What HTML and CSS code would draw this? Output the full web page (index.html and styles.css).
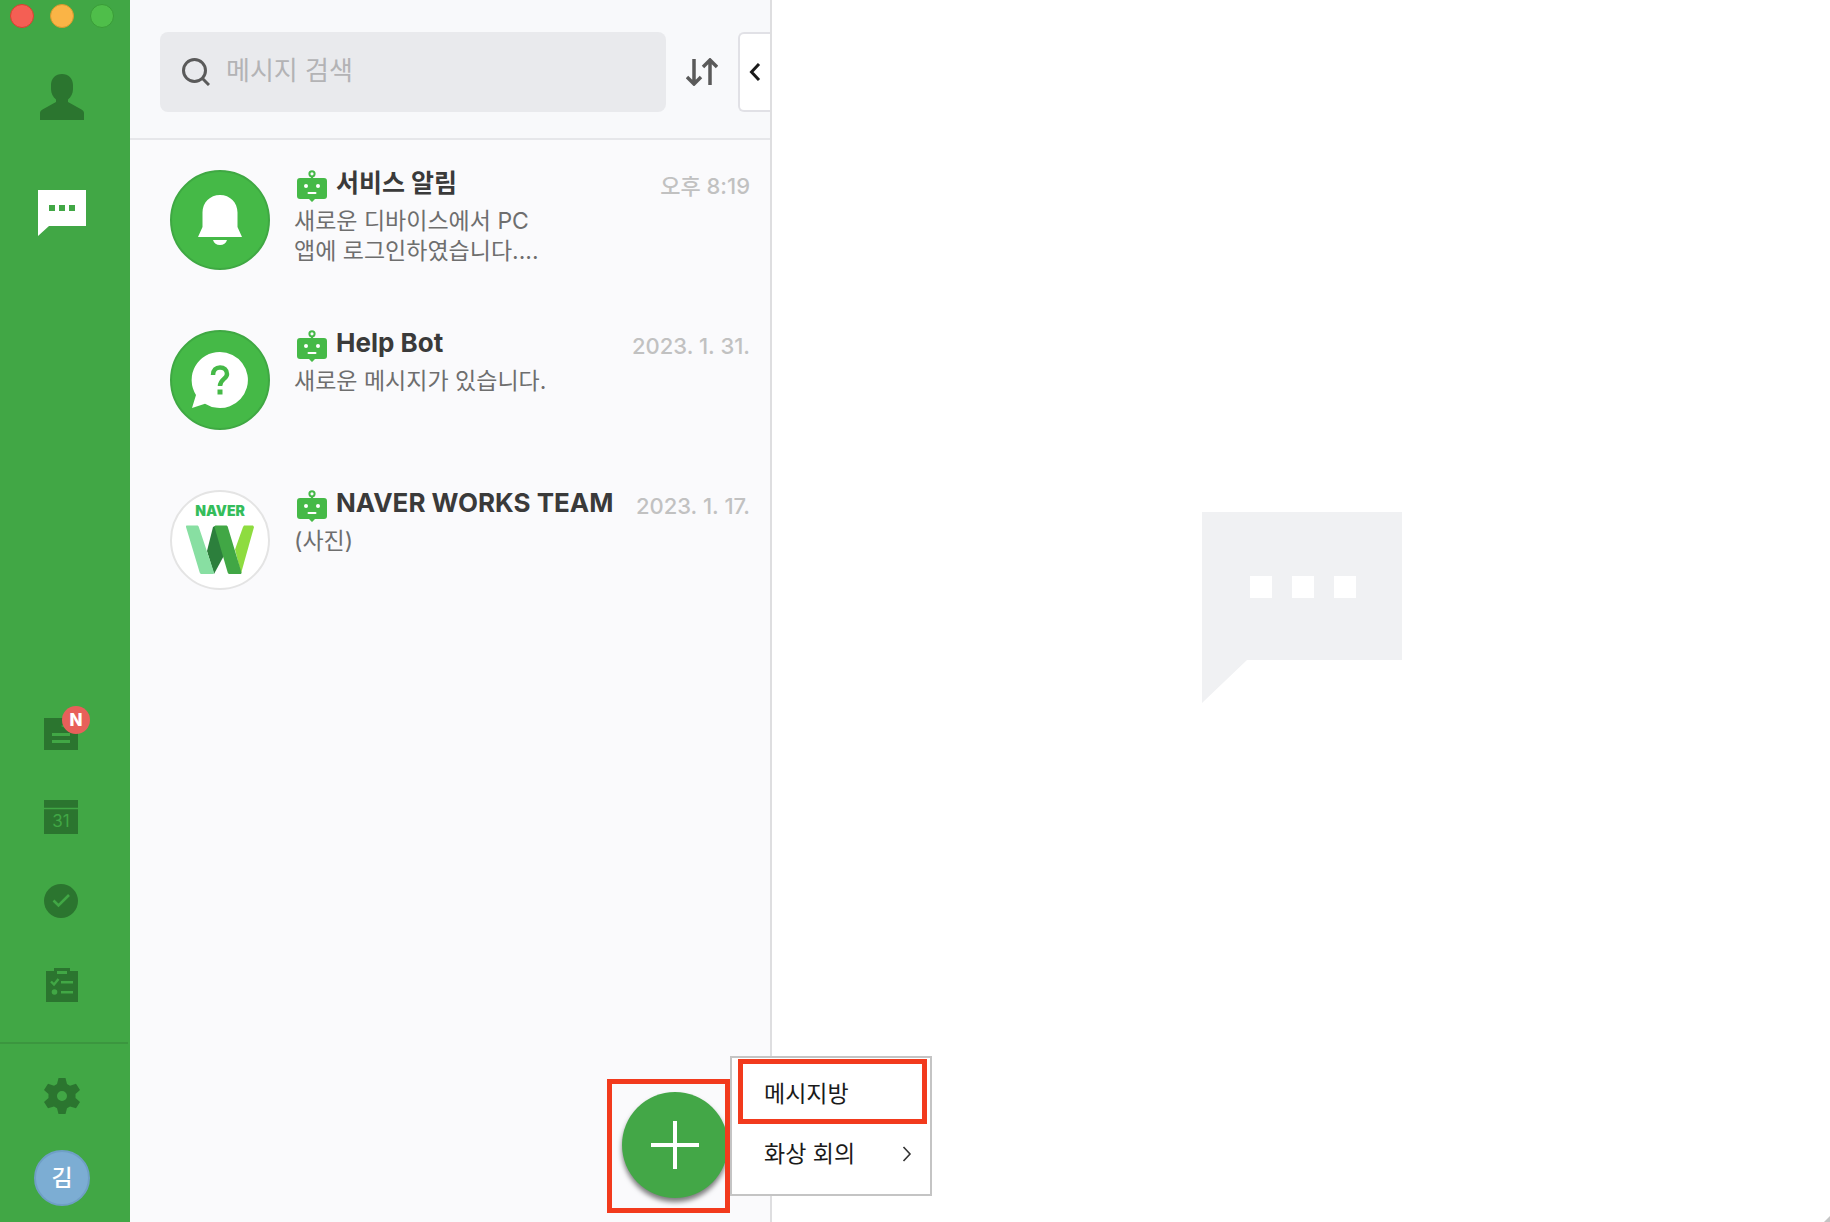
FILE: index.html
```
<!DOCTYPE html>
<html lang="ko">
<head>
    <meta charset="utf-8">
    <title>NAVER WORKS</title>
    <meta name="viewport" content="width=device-width, initial-scale=1">
    <link rel="stylesheet" href="styles.css">
</head>
<body>
    <!-- Shared icon -->
    <svg class="defs" width="0" height="0" aria-hidden="true">
        <symbol id="robot" viewBox="0 0 30 32">
            <circle cx="15" cy="3.8" r="2.6" fill="none" stroke="#45b947" stroke-width="2"/>
            <path d="M14 6h2v3h-2z" fill="#45b947"/>
            <path d="M3 8h24a3 3 0 0 1 3 3v15a3 3 0 0 1-3 3h-9l-3 3-3-3H3a3 3 0 0 1-3-3V11a3 3 0 0 1 3-3z" fill="#45b947"/>
            <circle cx="9" cy="16" r="2" fill="#fff"/>
            <circle cx="21" cy="16" r="2" fill="#fff"/>
            <rect x="10.500" y="22" width="9" height="2" rx="1" fill="#fff"/>
        </symbol>
    </svg>

    <div class="app">
        <nav class="sidebar">
            <div class="window-controls">
                <button class="dot dot-close" aria-label="닫기"></button>
                <button class="dot dot-min" aria-label="최소화"></button>
                <button class="dot dot-max" aria-label="최대화"></button>
            </div>

            <div class="nav-main">
                <button aria-label="주소록">
                    <svg width="44" height="46" viewBox="0 0 44 46">
                        <path d="M22 0c6.500 0 11 4.500 11 11v4c0 4.500-2 8-5 10.500V28l13.500 7.500c1.500.9 2.500 2 2.500 3.500v7H0v-7c0-1.500 1-2.600 2.500-3.500L16 28v-2.500C13 23 11 19.500 11 15v-4C11 4.500 15.500 0 22 0z" fill="#2b752f"/>
                    </svg>
                </button>
                <button aria-label="메시지">
                    <svg width="48" height="46" viewBox="0 0 48 46">
                        <path d="M0 0h48v36H11L0 46z" fill="#fff"/>
                        <path d="M11 15h6v6h-6zM21 15h6v6h-6zM31 15h6v6h-6z" fill="#41a745"/>
                    </svg>
                </button>
            </div>

            <div class="nav-sub">
                <button class="nav-note" aria-label="게시판">
                    <svg width="34" height="32" viewBox="0 0 34 32">
                        <path d="M0 0h34v32H0z" fill="#2b752f"/>
                        <path d="M8 16.500h18M8 23.500h18" stroke="#41a745" stroke-width="3"/>
                        <path d="M17 8l4-2v4z" fill="#41a745"/>
                    </svg>
                    <span class="new-badge">N</span>
                </button>
                <button aria-label="캘린더">
                    <svg width="34" height="34" viewBox="0 0 34 34">
                        <path d="M0 0h34v34H0z" fill="#2b752f"/>
                        <path d="M0 8.500h34" stroke="#41a745" stroke-width="1.500"/>
                        <text x="17" y="27" text-anchor="middle" class="cal-day">31</text>
                    </svg>
                </button>
                <button aria-label="할 일">
                    <svg width="34" height="34" viewBox="0 0 34 34">
                        <circle cx="17" cy="17" r="17" fill="#2b752f"/>
                        <path d="M9.500 16.500l5 5L25 11" fill="none" stroke="#41a745" stroke-width="2.600"/>
                    </svg>
                </button>
                <button aria-label="설문">
                    <svg width="34" height="34" viewBox="-2 0 34 34">
                        <path d="M0 3h8V0h16v3h8v31H0z" fill="#2b752f"/>
                        <path d="M11 3h10v3H11z" fill="#41a745"/>
                        <path d="M5 13.500l3 3 4.500-5.500" fill="none" stroke="#41a745" stroke-width="2.400"/>
                        <circle cx="8.500" cy="24" r="2.800" fill="#41a745"/>
                        <path d="M15 14.300h12M15 24.300h12" stroke="#41a745" stroke-width="2.600"/>
                    </svg>
                </button>
            </div>

            <div class="nav-foot">
                <button aria-label="설정">
                    <svg width="36" height="36" viewBox="0 0 36 36">
                        <path fill-rule="evenodd" d="M14.500 0h7l1.500 6 3 1.700 6-2L36 12l-4.500 4v4l4.500 4-4 6.300-6-1.700-3 1.700-1.500 5.700h-7L13 30.300l-3-1.700-6 1.700L0 24l4.500-4v-4L0 12l4-6.300 6 2L13 6zM18 13a5 5 0 1 0 0 10 5 5 0 0 0 0-10z" fill="#2b752f"/>
                    </svg>
                </button>
                <button class="me" aria-label="내 프로필">김</button>
            </div>
        </nav>

        <section class="list-panel">
            <header class="list-header">
                <label class="search">
                    <svg width="28" height="28" viewBox="0 0 28 28">
                        <circle cx="12.500" cy="12.500" r="11" fill="none" stroke="#5a5a5a" stroke-width="3"/>
                        <path d="M20 20l7 7" stroke="#5a5a5a" stroke-width="3"/>
                    </svg>
                    <input type="text" placeholder="메시지 검색" aria-label="메시지 검색">
                </label>
                <button class="sort" aria-label="정렬">
                    <svg width="32" height="28" viewBox="0 0 32 28">
                        <path d="M8 1v24M1 19l7 7 7-7M24 27V3M17 9l7-7 7 7" fill="none" stroke="#5a5a5a" stroke-width="3.500"/>
                    </svg>
                </button>
                <button class="collapse" aria-label="접기">
                    <svg width="12" height="18" viewBox="0 0 12 18">
                        <path d="M10 1L2.500 9l7.500 8" fill="none" stroke="#1a1a1a" stroke-width="3"/>
                    </svg>
                </button>
            </header>

            <ul class="rooms">
                <li class="room">
                    <svg class="avatar" viewBox="0 0 100 100">
                        <circle cx="50" cy="50" r="49" fill="#45b947" stroke="#3fa843" stroke-width="2"/>
                        <path d="M50 25c10 0 17.500 7.500 17.500 17.500V57L72 67H28l4.500-10V42.500C32.500 32.500 40 25 50 25zM43 70h14c-1 3.300-3.500 5-7 5s-6-1.700-7-5z" fill="#fff"/>
                    </svg>
                    <div class="room-body">
                        <div class="room-top">
                            <svg class="bot"><use href="#robot"/></svg>
                            <h2>서비스 알림</h2>
                            <time>오후 8:19</time>
                        </div>
                        <p>새로운 디바이스에서 PC<br>앱에 로그인하였습니다....</p>
                    </div>
                </li>
                <li class="room">
                    <svg class="avatar" viewBox="0 0 100 100">
                        <circle cx="50" cy="50" r="49" fill="#45b947" stroke="#3fa843" stroke-width="2"/>
                        <path d="M50 22a28 28 0 1 1-15 51.700L22 78l4-13A28 28 0 0 1 50 22z" fill="#fff"/>
                        <path d="M43 45c0-5 3-7.500 7-7.500s7 2.500 7 6.500c0 5-7 5-7 12" fill="none" stroke="#45b947" stroke-width="4.500"/>
                        <path d="M47.500 59.500h5v5h-5z" fill="#45b947"/>
                    </svg>
                    <div class="room-body">
                        <div class="room-top">
                            <svg class="bot"><use href="#robot"/></svg>
                            <h2 lang="en">Help Bot</h2>
                            <time>2023. 1. 31.</time>
                        </div>
                        <p>새로운 메시지가 있습니다.</p>
                    </div>
                </li>
                <li class="room">
                    <svg class="avatar" viewBox="0 0 100 100">
                        <circle cx="50" cy="50" r="49" fill="#fff" stroke="#e4e4e4" stroke-width="2"/>
                        <text x="50" y="26" text-anchor="middle" class="logo-name">NAVER</text>
                        <path d="M73 37l1-1.500h9l1 1.500-13 46.500-6-24z" fill="#8edc3f"/>
                        <path d="M45 36h9l3 24-13 24-7-23 6-24z" fill="#2c7f3c"/>
                        <path d="M17 35.500h10c1 0 1.500.5 1.800 1.500L44 82.500c0 1-.5 1.500-1.500 1.500H32c-1 0-2-.5-2.300-1.500L16 37c0-1 0-1.500 1-1.500z" fill="#88dfa2"/>
                        <path d="M46 35.500h10c1 0 1.500.5 1.800 1.500L71.500 82.500c0 1-.5 1.500-1.500 1.500H60c-1 0-2-.5-2.300-1.500L44.500 37c0-1 .5-1.500 1.500-1.500z" fill="#41a745"/>
                    </svg>
                    <div class="room-body">
                        <div class="room-top">
                            <svg class="bot"><use href="#robot"/></svg>
                            <h2 lang="en">NAVER WORKS TEAM</h2>
                            <time>2023. 1. 17.</time>
                        </div>
                        <p>(사진)</p>
                    </div>
                </li>
            </ul>

            <!-- New message button and its menu -->
            <div class="compose">
                <div class="fab-mark">
                    <button class="fab" aria-label="새로 만들기">
                        <svg width="48" height="48" viewBox="0 0 48 48">
                            <path d="M24 0v48M0 24h48" stroke="#fff" stroke-width="4"/>
                        </svg>
                    </button>
                </div>
                <div class="menu">
                    <button class="menu-item marked">메시지방</button>
                    <button class="menu-item">화상 회의
                        <svg width="10" height="20" viewBox="0 0 10 20">
                            <path d="M1.500 5L8 12l-6.500 7" fill="none" stroke="#333" stroke-width="1.600"/>
                        </svg>
                    </button>
                </div>
            </div>
        </section>

        <main class="content">
            <svg width="200" height="191" viewBox="0 0 200 191">
                <path d="M0 0h200v148H45L0 191z" fill="#f0f1f3"/>
                <path d="M48 64h22v22H48zM90 64h22v22H90zM132 64h22v22h-22z" fill="#fff"/>
            </svg>
            <svg class="grip" width="6" height="6" viewBox="0 0 6 6">
                <path d="M6 0v6H0z" fill="#c4c4c4"/>
            </svg>
        </main>
    </div>
</body>
</html>
```
FILE: styles.css
```
* {
    box-sizing: border-box;
}

html, body {
    height: 100%;
    margin: 0;
}

body {
    font-family: Inter, "Noto Sans CJK KR", sans-serif;
    font-size: 23px;
    color: #1a1a1a;
    background: #fff;
    overflow: hidden;
}

button {
    flex: none;
    font: inherit;
    color: inherit;
    background: none;
    border: 0;
    padding: 0;
    cursor: pointer;
}

svg {
    display: block;
    flex: none;
}

.defs {
    position: absolute;
}

.app {
    display: flex;
    height: 100vh;
}

/* Sidebar */
.sidebar {
    display: flex;
    flex-direction: column;
    flex: none;
    width: 130px;
    background: #41a745;
}

.window-controls {
    display: flex;
    gap: 16px;
    padding: 4px 10px;
}

.dot {
    width: 24px;
    height: 24px;
    border-radius: 50%;
    border: 1px solid;
}

.dot-close {
    background: #f45f54;
    border-color: #d8402f;
}

.dot-min {
    background: #fab446;
    border-color: #d9982c;
}

.dot-max {
    background: #4fbe4a;
    border-color: #3a9c38;
}

.nav-main {
    display: flex;
    flex-direction: column;
    align-items: center;
    gap: 70px;
    padding: 42px 6px 0 0;
}

.nav-sub {
    display: flex;
    flex-direction: column;
    align-items: center;
    gap: 50px;
    margin-top: auto;
    padding: 0 8px 40px 0;
}

.nav-note {
    position: relative;
}

.new-badge {
    position: absolute;
    top: -12px;
    left: 18px;
    width: 28px;
    height: 28px;
    border-radius: 50%;
    background: #e8605a;
    color: #fff;
    font-size: 17px;
    font-weight: 800;
    line-height: 28px;
    text-align: center;
}

.cal-day {
    font-size: 17px;
    fill: #41a745;
}

.nav-foot {
    display: flex;
    flex-direction: column;
    align-items: center;
    gap: 36px;
    margin-right: 2px;
    padding: 34px 4px 16px 0;
    border-top: 2px solid #3b963f;
}

.me {
    width: 56px;
    height: 56px;
    border-radius: 50%;
    border: 2px solid #6f9fc6;
    background: #7cadd3;
    color: #fff;
    font-weight: 500;
    line-height: 52px;
}

/* Conversation list */
.list-panel {
    position: relative;
    flex: none;
    width: 642px;
    background: #fafafc;
    border-right: 2px solid #dedee0;
}

.list-header {
    display: flex;
    height: 140px;
    padding: 32px 0 26px 30px;
    background: #f8f9fb;
    border-bottom: 2px solid #e6e7ea;
}

.search {
    display: flex;
    align-items: center;
    flex: 1;
    gap: 16px;
    padding: 0 22px;
    background: #e9eaed;
    border-radius: 8px;
}

.search input {
    flex: 1;
    min-width: 0;
    height: 40px;
    padding: 0 0 4px;
    border: 0;
    outline: 0;
    background: none;
    font: inherit;
    font-size: 26px;
}

.search input::placeholder {
    color: #b3b3b5;
}

.sort {
    width: 72px;
    padding-left: 20px;
}

.collapse {
    width: 32px;
    padding-left: 9px;
    background: #fff;
    border: 2px solid #e1e1e6;
    border-right: 0;
    border-radius: 6px 0 0 6px;
}

.rooms {
    list-style: none;
    margin: 0;
    padding: 0;
}

.room {
    display: flex;
    gap: 24px;
    height: 160px;
    padding: 30px 20px 30px 40px;
}

.avatar {
    width: 100px;
    height: 100px;
}

.room-body {
    flex: 1;
}

.room-top {
    display: flex;
    align-items: flex-start;
    gap: 9px;
    padding-left: 3px;
    line-height: 24px;
}

.bot {
    width: 30px;
    height: 32px;
}

h2 {
    margin: 0;
    font-size: 25px;
    font-weight: 700;
    line-height: 26px;
    white-space: nowrap;
    color: #3a3a3a;
}

h2:lang(en) {
    font-size: 26px;
}

time {
    margin-left: auto;
    padding-top: 4px;
    font-size: 22px;
    font-weight: 500;
    color: #c1c1c1;
    white-space: nowrap;
}

.room p {
    margin: 4px 0 0;
    line-height: 30px;
    color: #6e6e6e;
}

.logo-name {
    font-size: 14px;
    font-weight: 900;
    fill: #35bd5b;
}

/* Compose button */
.compose {
    position: absolute;
    right: -162px;
    bottom: 9px;
    display: flex;
    align-items: flex-start;
}

.fab-mark {
    width: 123px;
    height: 134px;
    margin-top: 23px;
    padding: 8px 10px;
    border: 5px solid #f23a1d;
    overflow: hidden;
}

.fab {
    display: flex;
    align-items: center;
    justify-content: center;
    width: 106px;
    height: 106px;
    border-radius: 50%;
    background: #43a747;
    box-shadow: 0 4px 5px rgba(0, 0, 0, 0.5);
}

.menu {
    display: flex;
    flex-direction: column;
    width: 202px;
    height: 140px;
    padding: 1px 3px 1px 6px;
    background: #fff;
    border: 2px solid #c4c4c4;
}

.menu-item {
    display: flex;
    align-items: center;
    justify-content: space-between;
    height: 56px;
    padding: 0 15px 0 26px;
}

.marked {
    height: 65px;
    padding-left: 21px;
    border: 5px solid #f23a1d;
}

/* Empty conversation */
.content {
    position: relative;
    display: flex;
    align-items: center;
    justify-content: center;
    flex: 1;
    padding: 0 0 8px 2px;
}

/* Window resize corner */
.grip {
    position: absolute;
    right: 0;
    bottom: 0;
}
```
